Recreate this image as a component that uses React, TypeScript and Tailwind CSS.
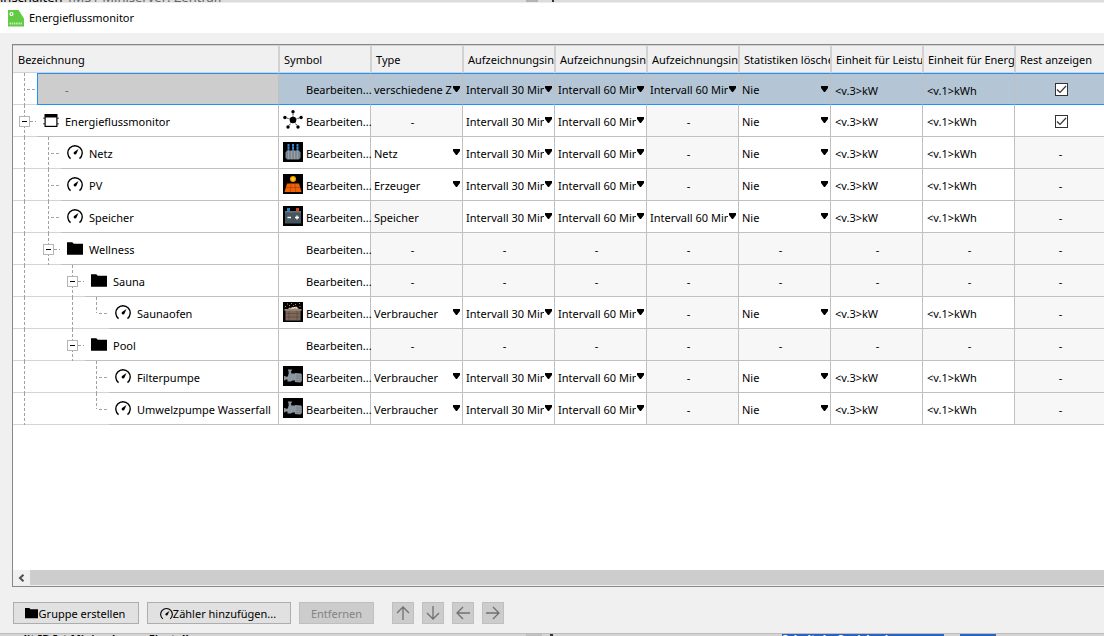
import { useState, type ReactNode } from 'react'

type Seg = 'none' | 'line' | 'tee' | 'elbow' | 'box'
type Kind = 'empty' | 'monitor' | 'meter' | 'folder'
type SymbolName = 'hub' | 'grid' | 'solar' | 'battery' | 'sauna' | 'pump'

interface Row {
    name: string
    segs: Seg[]
    kind: Kind
    symbol?: SymbolName
    type?: string
    typeFixed?: boolean
    intervals: (string | null)[]
    statistics?: string
    power?: string
    energy?: string
    rest?: boolean
    selected?: boolean
}

const I30 = 'Intervall 30 Minuten'
const I60 = 'Intervall 60 Minuten'
const units = { statistics: 'Nie', power: '<v.3>kW', energy: '<v.1>kWh' }

const rows: Row[] = [
    { name: '-', segs: ['tee'], kind: 'empty', type: 'verschiedene Zähler', intervals: [I30, I60, I60], ...units, rest: true, selected: true },
    { name: 'Energieflussmonitor', segs: ['box'], kind: 'monitor', symbol: 'hub', intervals: [I30, I60, null], ...units, rest: true },
    { name: 'Netz', segs: ['line', 'tee'], kind: 'meter', symbol: 'grid', type: 'Netz', intervals: [I30, I60, null], ...units },
    { name: 'PV', segs: ['line', 'tee'], kind: 'meter', symbol: 'solar', type: 'Erzeuger', intervals: [I30, I60, null], ...units },
    { name: 'Speicher', segs: ['line', 'tee'], kind: 'meter', symbol: 'battery', type: 'Speicher', typeFixed: true, intervals: [I30, I60, I60], ...units },
    { name: 'Wellness', segs: ['line', 'box'], kind: 'folder', intervals: [null, null, null] },
    { name: 'Sauna', segs: ['line', 'none', 'box'], kind: 'folder', intervals: [null, null, null] },
    { name: 'Saunaofen', segs: ['line', 'none', 'line', 'elbow'], kind: 'meter', symbol: 'sauna', type: 'Verbraucher', intervals: [I30, I60, null], ...units },
    { name: 'Pool', segs: ['line', 'none', 'box'], kind: 'folder', intervals: [null, null, null] },
    { name: 'Filterpumpe', segs: ['line', 'none', 'none', 'tee'], kind: 'meter', symbol: 'pump', type: 'Verbraucher', intervals: [I30, I60, null], ...units },
    { name: 'Umwelzpumpe Wasserfall', segs: ['line', 'none', 'none', 'elbow'], kind: 'meter', symbol: 'pump', type: 'Verbraucher', intervals: [I30, I60, null], ...units },
]

const headers = [
    'Bezeichnung',
    'Symbol',
    'Type',
    'Aufzeichnungsintervall',
    'Aufzeichnungsintervall',
    'Aufzeichnungsintervall',
    'Statistiken löschen',
    'Einheit für Leistung',
    'Einheit für Energie',
    'Rest anzeigen',
]

export default function App() {
    return (
        <div className="flex h-screen flex-col overflow-hidden bg-[#d4d4d4] font-['Noto_Sans','Open_Sans',sans-serif] text-[11px] text-black">
            <BackgroundTop />
            <main className="flex min-h-0 flex-1 flex-col border-b border-[#bdbdbd] bg-[#f0f0f0]">
                <header className="flex h-[30px] shrink-0 items-center gap-[5px] bg-white pl-2">
                    <ConfigLogo />
                    <h1 className="text-[11px]">Energieflussmonitor</h1>
                </header>
                <section className="ml-3 mt-[11px] flex min-h-0 flex-1 flex-col border border-r-0 border-[#828790] bg-white">
                    <div className="min-h-0 flex-1 overflow-hidden">
                        <MeterTable />
                    </div>
                    <div className="flex h-4 shrink-0 border-b border-[#f0f0f0] bg-[#cdcdcd]">
                        <button aria-label="Nach links" className="flex w-[17px] items-center justify-center bg-[#f0f0f0]">
                            <svg width="7" height="8" viewBox="0 0 7 8" fill="none" stroke="#505050" strokeWidth="2">
                                <path d="M5.5 .7 2 4l3.500 3.300" />
                            </svg>
                        </button>
                    </div>
                </section>
                <Toolbar />
            </main>
            <BackgroundBottom />
        </div>
    )
}

function MeterTable() {
    return (
        <table className="w-[1094px] table-fixed border-separate border-spacing-0">
            <colgroup>
                <col className="w-[266px]" />
                {headers.slice(1).map((_, i) => (
                    <col key={i} className="w-[92px]" />
                ))}
            </colgroup>
            <thead>
                <tr>
                    {headers.map((title, i) => (
                        <th
                            key={i}
                            className="h-7 overflow-hidden whitespace-nowrap border-y border-r border-[#d2d2d2] bg-[#f0f0f0] pb-0 pl-1 pt-0.5 text-left font-normal not-first:border-l first:pl-[5px]"
                        >
                            {title}
                        </th>
                    ))}
                </tr>
            </thead>
            <tbody>
                {rows.map((row) => (
                    <TableRow key={row.name} row={row} />
                ))}
            </tbody>
        </table>
    )
}

function TableRow({ row }: { row: Row }) {
    const [rest, setRest] = useState(row.rest ?? false)
    const sel = row.selected ?? false

    return (
        <tr>
            <td className="p-0">
                <div className="flex h-8">
                    {row.segs.map((seg, i) => (
                        <TreeSegment key={i} seg={seg} name={row.name} />
                    ))}
                    <div
                        className={
                            sel
                                ? 'flex flex-1 items-center gap-1.5 border border-r-[#c0c0c0] border-[#1e90ff] bg-[#cdcdcd] pl-[5px] text-[#606060]'
                                : 'flex flex-1 items-center gap-1.5 border-b border-r border-[#c0c0c0] pl-1.5'
                        }
                    >
                        <KindIcon kind={row.kind} />
                        <span className="whitespace-nowrap pt-[3px]">{row.name}</span>
                    </div>
                </div>
            </td>
            <Cell selected={sel} spill>
                <div className="flex items-center gap-[3px] pl-1">
                    <span className="mb-0.5 h-5 w-5 shrink-0">{row.symbol && <SymbolIcon name={row.symbol} />}</span>
                    <button className="whitespace-nowrap pt-[3px]">Bearbeiten...</button>
                </div>
            </Cell>
            {row.typeFixed ? (
                <Cell muted>
                    <p className="pl-[3px] pt-[3px]">{row.type}</p>
                </Cell>
            ) : (
                <SelectCell label={`Type ${row.name}`} value={row.type} selected={sel} />
            )}
            {row.intervals.map((value, i) => (
                <SelectCell key={i} label={`Aufzeichnungsintervall ${i + 1} ${row.name}`} value={value} selected={sel} />
            ))}
            <SelectCell label={`Statistiken löschen ${row.name}`} value={row.statistics} selected={sel} />
            <UnitCell label={`Einheit für Leistung ${row.name}`} value={row.power} selected={sel} />
            <UnitCell label={`Einheit für Energie ${row.name}`} value={row.energy} selected={sel} />
            {row.rest === undefined ? (
                <Cell muted>
                    <p className="pt-[3px] text-center">-</p>
                </Cell>
            ) : (
                <Cell selected={sel}>
                    <div className="flex justify-center pl-0.5 pt-px">
                        <label className="relative block h-[13px] w-[13px]">
                            <input
                                type="checkbox"
                                aria-label={`Rest anzeigen ${row.name}`}
                                checked={rest}
                                onChange={(e) => setRest(e.target.checked)}
                                className="block h-[13px] w-[13px] appearance-none border border-[#333] bg-white"
                            />
                            {rest && (
                                <svg className="pointer-events-none absolute inset-0" width="13" height="13" viewBox="0 0 13 13" fill="none" stroke="#333" strokeWidth="1.200">
                                    <path d="m2 6.500 3 3 6-6.500" />
                                </svg>
                            )}
                        </label>
                    </div>
                </Cell>
            )}
        </tr>
    )
}

function Cell({ children, selected, muted, spill }: { children: ReactNode; selected?: boolean; muted?: boolean; spill?: boolean }) {
    let look = 'border-b border-b-[#c0c0c0]'
    if (selected) look = 'border-y border-y-[#1e90ff] bg-[#b4c5d6]'
    else if (muted) look = 'border-b border-b-[#c0c0c0] bg-[#f7f7f7]'
    const overflow = spill ? 'overflow-visible' : 'overflow-hidden'
    return <td className={`h-8 border-r border-r-[#c0c0c0] p-0 ${overflow} ${look}`}>{children}</td>
}

function SelectCell({ label, value, selected }: { label: string; value?: string | null; selected?: boolean }) {
    if (!value) {
        return (
            <Cell muted>
                <p className="pr-2 pt-[3px] text-center">-</p>
            </Cell>
        )
    }
    return (
        <Cell selected={selected}>
            <div className="flex items-center gap-px pr-[2px] pt-[3px]">
                <select aria-label={label} defaultValue={value} className="ml-[3px] h-5 min-w-0 flex-1 appearance-none overflow-hidden bg-transparent">
                    <option>{value}</option>
                </select>
                <svg className="mb-1 shrink-0" width="7" height="6" viewBox="0 0 7 6">
                    <path d="M0 0h7v2L4 6H3L0 2Z" />
                </svg>
            </div>
        </Cell>
    )
}

function UnitCell({ label, value, selected }: { label: string; value?: string; selected?: boolean }) {
    if (!value) {
        return (
            <Cell muted>
                <p className="pl-0.5 pt-[3px] text-center">-</p>
            </Cell>
        )
    }
    return (
        <Cell selected={selected}>
            <input type="text" aria-label={label} defaultValue={value} className="block h-5 w-full bg-transparent pl-1 pt-0.5" />
        </Cell>
    )
}

// One 24px step of the tree guides
function TreeSegment({ seg, name }: { seg: Seg; name: string }) {
    const dash = { stroke: '#a0a0a0', strokeDasharray: '3 2' }
    return (
        <div className="relative h-8 w-6 shrink-0 border-b border-[#d4d4d4]">
            {seg !== 'none' && (
                <svg width="24" height="32" viewBox="0 0 24 32" shapeRendering="crispEdges">
                    <path d={seg === 'elbow' ? 'M11.500 0v16' : 'M11.500 0v32'} {...dash} />
                    {seg !== 'line' && <path d={seg === 'box' ? 'M17 16.500h6' : 'M14 16.500h9'} {...dash} />}
                </svg>
            )}
            {seg === 'box' && (
                <button
                    aria-label={`${name} zuklappen`}
                    className="absolute left-1.5 top-[11px] flex h-[11px] w-[11px] items-center justify-center border border-[#b4b4b4] bg-white"
                >
                    <span className="h-px w-[5px] bg-black" />
                </button>
            )}
        </div>
    )
}

function KindIcon({ kind }: { kind: Kind }) {
    if (kind === 'meter') {
        return (
            <span className="mb-0.5">
                <MeterIcon size={16} />
            </span>
        )
    }
    if (kind === 'folder') return <FolderIcon size={16} />
    if (kind === 'monitor') {
        return (
            <svg width="16" height="16" viewBox="0 0 16 16" className="shrink-0">
                <path d="M1.500 1h13v13h-13Z" />
                <path d="M2.700 4.500h10.600v8.300H2.700Z" fill="#fff" />
                <path d="M.5 4.500h1v1.500h-1Zm0 5.500h1v1.500h-1ZM14.500 4.500h1v1.500h-1Zm0 5.500h1v1.500h-1Z" />
            </svg>
        )
    }
    return <span className="w-4" />
}

function MeterIcon({ size }: { size: number }) {
    return (
        <svg width={size} height={size} viewBox="0 0 16 16" fill="none" className="block shrink-0">
            <path d="M3.500 14.600A7.200 7.200 0 1 1 12.500 14.600" stroke="#000" strokeWidth="1.400" />
            <path d="M11.500 5 9.500 9.600A1.500 1.500 0 1 1 7 8Z" fill="#000" />
        </svg>
    )
}

function FolderIcon({ size }: { size: number }) {
    return (
        <svg width={size} height={size} viewBox="0 0 16 16" className="shrink-0">
            <path d="M0 1.200h5.300l1.500 1.600H16v11H0Z" />
        </svg>
    )
}

function SymbolIcon({ name }: { name: SymbolName }) {
    if (name === 'hub') {
        return (
            <svg width="20" height="20" viewBox="0 0 20 20">
                <path d="M10 10V2M10 10 2 7.500M10 10l8-2.500M10 10l-5 7M10 10l5 7" stroke="#000" strokeWidth=".8" strokeDasharray="1.500 .8" />
                <circle cx="10" cy="10" r="3.300" />
                <circle cx="10" cy="1.800" r="1.700" />
                <circle cx="1.900" cy="7.500" r="1.700" />
                <circle cx="18.100" cy="7.500" r="1.700" />
                <circle cx="5" cy="17" r="1.700" />
                <circle cx="15" cy="17" r="1.700" />
            </svg>
        )
    }
    return (
        <svg width="20" height="20" viewBox="0 0 20 20">
            <path d="M0 0h20v20H0Z" />
            {name === 'grid' && (
                <>
                    <path d="M5.500 2v7M10 2v7M14.500 2v7" stroke="#3d86d0" strokeWidth="2" strokeDasharray="2.500 .3" />
                    <path d="M4 8.500h12l1.500 2v5l-1.500 2H4l-1.500-2v-5Z" fill="#7d8790" />
                    <path d="M5.500 9v8M8.500 9v8M11.500 9v8M14.500 9v8" stroke="#a0a8af" strokeWidth=".8" />
                </>
            )}
            {name === 'solar' && (
                <>
                    <circle cx="10" cy="5" r="3" fill="#ff9800" />
                    <circle cx="10" cy="5" r="1.800" fill="#ffd21f" />
                    <path d="M4 9.500h12l2.500 8.500h-17Z" fill="#ee6206" />
                    <path d="M3 13.500h14M8 9.500 7.300 18M12 9.500l.7 8.500" stroke="#a83c00" strokeWidth=".6" />
                </>
            )}
            {name === 'battery' && (
                <>
                    <path d="M4 2h3v3H4Z" fill="#2d7fd0" />
                    <path d="M13 2h3v3h-3Z" fill="#d8401f" />
                    <path d="M2 5h16v12.500H2Z" fill="#46545d" />
                    <path d="M2 5h16v1.500H2Z" fill="#66747c" />
                    <path d="M4.500 11.500H8M12 11.500h4M14 9.500v4" stroke="#fff" strokeWidth="1.300" />
                </>
            )}
            {name === 'sauna' && (
                <>
                    <path d="M2.500 7.500h15V18.500h-15Z" fill="#80695c" />
                    <path d="M1.500 7h17v1.800h-17Z" fill="#9c8678" />
                    <path d="M2.500 11.500h15M2.500 15h15M6 9v9.500M14 9v9.500" stroke="#58463d" strokeWidth=".7" />
                    <path d="m5 7 1.500-1.500L8 6l1.500-1L12 6l1.500-1.500L16 7Z" fill="#b9a98c" />
                    <path d="M8.500 6h2.500l1-1 2 1" stroke="#fff0c0" fill="none" />
                    <path d="M4 2h1M8 1.500h1M12 2.500h1M16 1.500h1M2 4.500h1M6 3.500h1M10 3.500h1M16.500 4.500h1" stroke="#b58a45" />
                </>
            )}
            {name === 'pump' && (
                <>
                    <path d="M5 3.500h4v1.300H8l.4 2.700H12V7l6 .5.800 1v6.500L17.500 16.500 12 16v-1.500H9.500L8 15.500H4.500v-2h-2v.8H1v-4.300h1.500v.8h2L5.600 8V4.800H5Z" fill="#8b969e" />
                    <path d="M13 10h5M13 12.300h5M13 14.600h5" stroke="#67737b" strokeWidth=".6" />
                </>
            )}
        </svg>
    )
}

function ConfigLogo() {
    return (
        <svg width="16" height="17" viewBox="0 0 16 17">
            <path d="M0 0h10.500L16 8.500v8H0Z" fill="#62cb45" />
            <circle cx="3.500" cy="4" r="1.500" fill="none" stroke="#fff" strokeWidth="1.200" />
            <path d="M1.500 13.500h13" stroke="#c4edb8" strokeWidth="2" strokeDasharray="1.500 .7" />
        </svg>
    )
}

function Toolbar() {
    const arrows = [
        { label: 'Nach oben', d: 'M7 14V1M1 7l6-6 6 6' },
        { label: 'Nach unten', d: 'M7 0v13M1 7l6 6 6-6' },
        { label: 'Ausrücken', d: 'M14 7H1M7 1 1 7l6 6' },
        { label: 'Einrücken', d: 'M0 7h13M7 1l6 6-6 6' },
    ]
    return (
        <div className="flex shrink-0 items-center gap-2 pb-[9px] pl-[13px] pt-[15px]">
            <button className="flex h-[22px] w-[126px] items-center justify-center gap-px border border-[#adadad] bg-[#e1e1e1] pr-0.5">
                <FolderIcon size={13} />
                <span className="pt-0.5">Gruppe erstellen</span>
            </button>
            <button className="flex h-[22px] w-36 items-center justify-center border border-[#adadad] bg-[#e1e1e1] pr-0.5">
                <MeterIcon size={13} />
                <span className="pt-0.5">Zähler hinzufügen...</span>
            </button>
            <button disabled className="h-[22px] w-[75px] border border-[#bfbfbf] bg-[#cccccc] pt-0.5 text-[#838383]">
                Entfernen
            </button>
            <div className="flex gap-2 pl-2.5">
                {arrows.map((arrow) => (
                    <button
                        key={arrow.label}
                        disabled
                        aria-label={arrow.label}
                        className="flex h-[22px] w-[22px] items-center justify-center border border-[#bfbfbf] bg-[#cccccc]"
                    >
                        <svg width="14" height="14" viewBox="0 0 14 14" fill="none" stroke="#707070" strokeWidth="1.300">
                            <path d={arrow.d} />
                        </svg>
                    </button>
                ))}
            </div>
        </div>
    )
}

// Slivers of the window behind the dialog
function BackgroundTop() {
    return (
        <div className="flex h-[3px] shrink-0 items-end overflow-hidden border-b border-[#ececec] bg-[#dcdcdc]">
            <div className="flex w-[526px] gap-1.5 whitespace-nowrap text-[13px] leading-[10px]">
                <span>inschalten</span>
                <span className="text-[#666]">(MS1 Miniserver: Zentral)</span>
            </div>
            <div className="h-[3px] w-3 bg-[#b4b4b4]" />
            <div className="ml-3.5 h-[3px] w-0.5 bg-[#333]" />
        </div>
    )
}

function BackgroundBottom() {
    return (
        <div className="flex h-[2px] shrink-0 items-start overflow-hidden text-[11px] leading-[9px]">
            <div className="w-[526px] whitespace-nowrap pl-5">
                <b>dit ID Ist Minimale</b> <b className="ml-6">Einstellungen</b>
            </div>
            <div className="h-[3px] w-4 bg-[#c0c0c0]" />
            <div className="ml-2 h-[3px] w-[3px] bg-[#333]" />
            <b className="ml-[229px] w-[162px] overflow-hidden whitespace-nowrap bg-[#2b62c0] text-white">Schaltuhr Speicherbaum</b>
            <div className="ml-4 h-[3px] w-9 bg-[#2b62c0]" />
        </div>
    )
}
